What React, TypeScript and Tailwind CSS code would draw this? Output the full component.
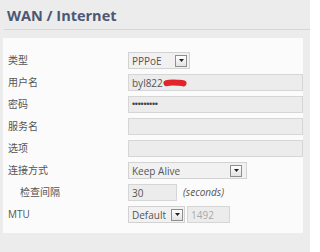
import type { ReactNode } from "react"

const font = "font-['Open_Sans','Noto_Sans_CJK_SC',sans-serif]"

function DropButton() {
  return (
    <span className="flex h-[12px] w-[12px] shrink-0 items-center justify-center border border-[#8e8e8e] bg-gradient-to-b from-white to-[#e2e2e2]">
      <svg width="5" height="3" viewBox="0 0 5 3">
        <path d="M0 0h5L2.5 3z" fill="#222" />
      </svg>
    </span>
  )
}

function Select({ value, width, pr }: { value: string; width: string; pr: string }) {
  return (
    <div
      className={`flex h-[17px] shrink-0 items-center justify-between border border-[#d2d2d2] bg-[#f1f1f1] pl-[3px] ${width} ${pr}`}
    >
      <span className="text-[10px] leading-none text-[#555]">{value}</span>
      <DropButton />
    </div>
  )
}

function Field({ children, className = "" }: { children?: ReactNode; className?: string }) {
  return (
    <div
      className={`flex h-[17px] items-center border border-[#d6d6d6] bg-[#ececec] pl-[3px] text-[10px] leading-none text-[#555] ${className}`}
    >
      {children}
    </div>
  )
}

function Row({ label, indent, children }: { label: string; indent?: boolean; children: ReactNode }) {
  return (
    <div className="flex h-[22px] items-start">
      <div
        className={`flex h-[17px] w-[120px] shrink-0 items-center text-[10px] text-[#555] ${
          indent ? "pl-[12px]" : ""
        }`}
      >
        {label}
      </div>
      <div className="flex min-w-0 flex-1 items-center">{children}</div>
    </div>
  )
}

export default function App() {
  return (
    <div className={`h-[252px] w-[310px] overflow-hidden bg-[#ececec] ${font}`}>
      {/* Header */}
      <div className="ml-[4px] border-b border-[#d6d6d6] pt-[6px] pb-[3px] pl-[3px]">
        <h1 className="text-[14.5px] leading-[20px] font-bold text-[#4b5775]">WAN / Internet</h1>
      </div>

      {/* Settings panel */}
      <div className="mt-[8px] ml-[3px] h-[195px] w-[300px] overflow-hidden bg-[#fbfbfb] pt-[14px] pl-[5px]">
        <Row label="类型">
          <Select value="PPPoE" width="w-[62px]" pr="pr-[2px]" />
        </Row>
        <Row label="用户名">
          <Field className="flex-1">
            <span>byl822</span>
            {/* redaction mark */}
            <svg width="24" height="8" viewBox="0 0 24 8">
              <path
                d="M3.5 4.2C7 3.2 12 3.6 16 3.8s4 .4 4.5.6"
                stroke="#e0262c"
                strokeWidth="6"
                strokeLinecap="round"
                fill="none"
              />
            </svg>
          </Field>
        </Row>
        <Row label="密码">
          <Field className="flex-1">
            <span className="font-['Liberation_Sans',sans-serif] text-[9px] tracking-[-0.3px] text-[#444]">
              •••••••••
            </span>
          </Field>
        </Row>
        <Row label="服务名">
          <Field className="flex-1" />
        </Row>
        <Row label="选项">
          <Field className="flex-1" />
        </Row>
        <Row label="连接方式">
          <Select value="Keep Alive" width="w-[119px]" pr="pr-[4px]" />
        </Row>
        <Row label="检查间隔" indent>
          <Field className="w-[49px] shrink-0">30</Field>
          <span className="ml-[6px] text-[10px] italic text-[#555]">(seconds)</span>
        </Row>
        <Row label="MTU">
          <Select value="Default" width="w-[57px]" pr="pr-[1px]" />
          <Field className="ml-[2px] w-[43px] shrink-0 text-[#aaa]">1492</Field>
        </Row>
      </div>
    </div>
  )
}
